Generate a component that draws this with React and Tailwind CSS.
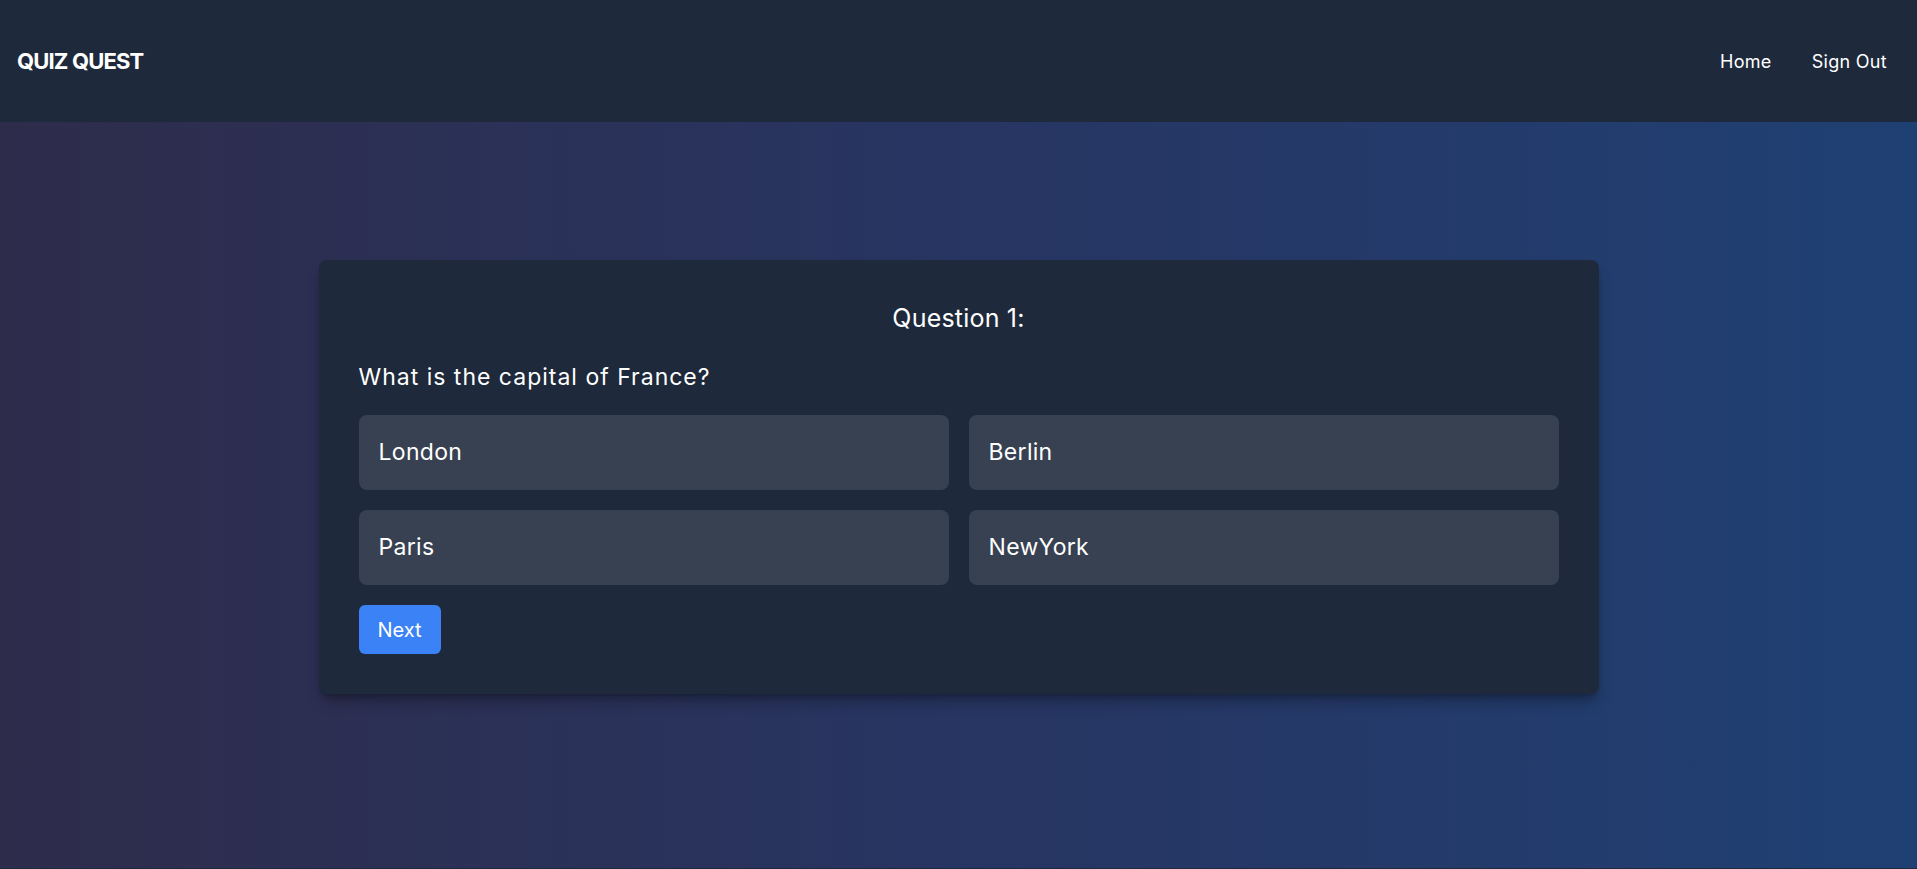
import React from "react";

const answers = ["London", "Berlin", "Paris", "NewYork"];

export default function App() {
  return (
    <div
      className="min-h-screen bg-[#1e293b] text-white"
      style={{ fontFamily: "Inter, 'Noto Sans', sans-serif" }}
    >
      <nav className="h-[122px] bg-[#1e293b] flex items-center justify-between pl-[17px] pr-[30px]">
        <div className="text-[22px] font-bold tracking-[-0.85px] leading-none">QUIZ QUEST</div>
        <div className="flex items-center gap-[40px] text-[18px] tracking-[0.3px]">
          <a className="cursor-pointer">Home</a>
          <a className="cursor-pointer">Sign Out</a>
        </div>
      </nav>
      <main className="h-[746px] bg-gradient-to-r from-[#2e2c4b] via-[#273562] to-[#1f4073] pt-[138px]">
        <div className="mx-auto w-[1280px] rounded-lg bg-[#1e293b] p-10 shadow-lg shadow-black/30">
          <h2 className="text-center text-[25px] leading-[36px] font-normal tracking-[0.2px]">Question 1:</h2>
          <p className="mt-[27px] text-[23px] leading-[28px] tracking-[1px]">What is the capital of France?</p>
          <div className="mt-[24px] grid grid-cols-2 gap-5">
            {answers.map((a) => (
              <button
                key={a}
                className="h-[75px] rounded-lg bg-[#374151] px-5 text-left text-[23px] tracking-[0.3px] text-white"
              >
                {a}
              </button>
            ))}
          </div>
          <button className="mt-5 h-[49px] w-[82px] rounded-md bg-[#3b82f6] text-center text-[20px] text-white">
            Next
          </button>
        </div>
      </main>
    </div>
  );
}
